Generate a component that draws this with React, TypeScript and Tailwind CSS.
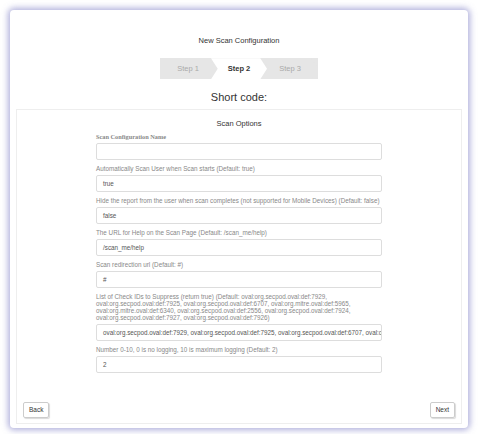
import React from "react";

const fields: { label: string; value: string }[] = [
  { label: "Scan Configuration Name", value: "" },
  { label: "Automatically Scan User when Scan starts (Default: true)", value: "true" },
  { label: "Hide the report from the user when scan completes (not supported for Mobile Devices) (Default: false)", value: "false" },
  { label: "The URL for Help on the Scan Page (Default: /scan_me/help)", value: "/scan_me/help" },
  { label: "Scan redirection url (Default: #)", value: "#" },
  {
    label:
      "List of Check IDs to Suppress (return true) (Default: oval:org.secpod.oval:def:7929, oval:org.secpod.oval:def:7925, oval:org.secpod.oval:def:6707, oval:org.mitre.oval:def:5965, oval:org.mitre.oval:def:6340, oval:org.secpod.oval:def:2556, oval:org.secpod.oval:def:7924, oval:org.secpod.oval:def:7927, oval:org.secpod.oval:def:7926)",
    value: "oval:org.secpod.oval:def:7929, oval:org.secpod.oval:def:7925, oval:org.secpod.oval:def:6707, oval:or",
  },
  { label: "Number 0-10, 0 is no logging, 10 is maximum logging (Default: 2)", value: "2" },
];

function Step({ label, active, first }: { label: string; active?: boolean; first?: boolean }) {
  return (
    <div
      className={`flex h-[21px] w-[56px] items-center justify-center text-[7.5px] ${active ? "bg-white font-bold text-[#333]" : "bg-[#e6e6e6] text-[#aaa]"}`}
      style={{
        clipPath: first
          ? "polygon(0 0, 88% 0, 100% 50%, 88% 100%, 0 100%)"
          : "polygon(0 0, 88% 0, 100% 50%, 88% 100%, 0 100%, 12% 50%)",
        marginLeft: first ? 0 : -5,
      }}
    >
      {label}
    </div>
  );
}

export default function App() {
  return (
    <div className="h-[434px] w-[478px] bg-white p-[10px] pb-[6px]" style={{ fontFamily: "'Liberation Sans', Arial, sans-serif" }}>
      <div className="flex h-full flex-col rounded-sm bg-white px-[6px] pb-[4px] shadow-[0_0_6px_2px_rgba(110,110,190,0.55)]">
        <div className="pt-[25px] text-center text-[7.5px] text-[#333]">New Scan Configuration</div>
        <div className="mt-[12px] flex justify-center">
          <div className="flex bg-[#e6e6e6]">
            <Step label="Step 1" first />
            <Step label="Step 2" active />
            <Step label="Step 3" />
          </div>
        </div>
        <div className="mt-[10px] text-center text-[11px] text-[#333]">Short code:</div>
        <div className="mt-[3px] flex flex-1 flex-col border border-[#eee] px-[6px]">
          <div className="mt-[8px] text-center text-[7.5px] text-[#333]">Scan Options</div>
          <div className="mx-auto mt-[4px] flex w-[286px] flex-col gap-[5px]">
            {fields.map((f, i) => (
              <div key={i}>
                <div className={`text-[6.3px] leading-[7px] text-[#888] ${i === 0 ? "font-bold" : ""}`} style={i === 0 ? { fontFamily: "'Liberation Serif', serif" } : undefined}>
                  {f.label}
                </div>
                <div className="mt-[3px] flex h-[17px] items-center overflow-hidden whitespace-nowrap rounded-[2px] border border-[#ddd] px-[6px] text-[6.3px] text-[#555]">
                  {f.value}
                </div>
              </div>
            ))}
          </div>
          <div className="mt-auto mb-[5px] flex justify-between">
            <button className="h-[16px] rounded-[2px] border border-[#ccc] px-[5px] text-[6.5px] text-[#333] shadow-[1px_1px_1px_rgba(0,0,0,0.15)]">Back</button>
            <button className="h-[16px] rounded-[2px] border border-[#ccc] px-[5px] text-[6.5px] text-[#333] shadow-[1px_1px_1px_rgba(0,0,0,0.15)]">Next</button>
          </div>
        </div>
      </div>
    </div>
  );
}
